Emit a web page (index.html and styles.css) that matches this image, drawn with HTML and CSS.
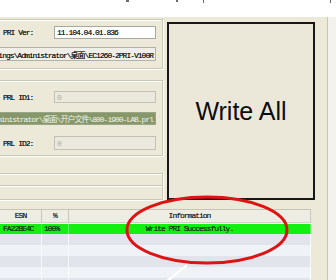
FILE: index.html
```html
<!DOCTYPE html>
<html>
<head>
<meta charset="utf-8">
<link rel="stylesheet" href="styles.css">
</head>
<body>
<div class="shot">
  <div class="topstrip">
    <span class="mk m1"></span><span class="mk m2"></span><span class="mk m3"></span><span class="mk m4"></span>
  </div>
  <div class="frame">
    <div class="work">
      <div class="upper">
        <div class="left mono">
          <div class="group g1">
            <div class="row"><span class="lbl">PRI Ver:</span><div class="tb tb-white">11.104.04.01.836</div></div>
            <div class="path path1"><span>C:\Documents and Settings\Administrator\桌面\EC1260-2PRI-V100R</span></div>
          </div>
          <div class="group g2">
            <div class="row r1"><span class="lbl">PRL ID1:</span><div class="tb tb-dis">0</div></div>
            <div class="path path2"><span>C:\Documents and Settings\Administrator\桌面\开户文件\800-1900-LAB.prl</span></div>
            <div class="row r3"><span class="lbl">PRL ID2:</span><div class="tb tb-dis">0</div></div>
          </div>
          <div class="group g3"><div class="sep"></div></div>
        </div>
        <div class="writeall">Write All</div>
      </div>
      <div class="table mono">
        <div class="trow thead">
          <div class="c">ESN</div><div class="c">%</div><div class="c info">Information</div>
        </div>
        <div class="trow ok">
          <div class="c esn">FA22BE4C</div><div class="c pct">100%</div><div class="c info">Write PRI Successfully.</div>
        </div>
        <div class="trow dark"><div class="c"></div><div class="c"></div><div class="c"></div></div>
        <div class="trow light"><div class="c"></div><div class="c"></div><div class="c"></div></div>
        <div class="trow dark"><div class="c"></div><div class="c"></div><div class="c"></div></div>
        <div class="trow light"><div class="c"></div><div class="c"></div><div class="c"></div></div>
        <div class="trow dark"><div class="c"></div><div class="c"></div><div class="c"></div></div>
      </div>
    </div>
    <div class="edge"></div>
  </div>
  <svg class="annot" width="336" height="280" viewBox="0 0 336 280">
    <ellipse cx="207" cy="230" rx="80" ry="33" fill="none" stroke="#de1414" stroke-width="3"/>
    <line x1="166" y1="282" x2="187" y2="265" stroke="#ffffff" stroke-width="2.2"/>
  </svg>
</div>
</body>
</html>
```
FILE: styles.css
```css
html, body {
  margin: 0;
  padding: 0;
  background: #ece9d8;
}
.shot {
  position: relative;
  width: 336px;
  height: 280px;
  overflow: hidden;
  background: #ece9d8;
}
.mono {
  font-family: "Liberation Mono", "Noto Sans CJK SC", monospace;
  font-size: 8px;
  letter-spacing: -1px;
  color: #000;
  text-shadow: 0 0 0.4px rgba(0, 0, 0, 0.6);
}
.topstrip {
  height: 17px;
  background: #fff;
  display: flex;
  align-items: flex-start;
}
.mk { display: block; background: #6a6a6a; }
.m1 { margin-left: 126px; width: 3px; height: 2px; }
.m2 { margin-left: 47px; width: 2px; height: 2px; }
.m3 { margin-left: 25px; width: 1px; height: 3px; }
.m4 { margin-left: 126px; width: 1px; height: 3px; }

.frame {
  display: flex;
  height: 263px;
}
.work {
  width: 328px;
  display: flex;
  flex-direction: column;
}
.edge {
  width: 8px;
  border-left: 1px solid #c7c5b6;
  background: #f3f2ec;
}
.upper {
  display: flex;
  height: 192px;
  flex-shrink: 0;
}
.left {
  width: 163px;
  display: flex;
  flex-direction: column;
  flex-shrink: 0;
}
.group {
  margin-left: -6px;
  width: 169px;
  box-sizing: border-box;
  border: 1px solid #c9c7b7;
  box-shadow: inset 1px 1px 0 #fff, 1px 1px 0 #fff;
  padding: 0 6px 0 8px;
}
.g1 { margin-top: 2px; height: 50px; padding-top: 6px; }
.g2 { margin-top: 11px; height: 76px; padding-top: 10px; }
.g3 { margin-top: 17px; height: 27px; padding-top: 11px; }
.sep {
  margin: 0 -6px 0 -8px;
  border-top: 1px solid #c9c7b7;
  border-bottom: 1px solid #fff;
}
.row {
  display: flex;
  align-items: center;
  height: 13px;
}
.r1 { height: 12px; }
.r3 { height: 14px; margin-top: 11px; }
.lbl {
  width: 51px;
  flex-shrink: 0;
  white-space: nowrap;
  color: #111;
}
.tb {
  width: 102px;
  height: 100%;
  box-sizing: border-box;
  border: 1px solid #a9a89e;
  padding-left: 2px;
  display: flex;
  align-items: center;
}
.tb-white { background: #fff; color: #111; }
.tb-dis { background: #ebe9dd; border-color: #c3c1b5; color: #aeaca2; text-shadow: none; }
.path {
  margin-left: -12px;
  width: 165px;
  box-sizing: border-box;
  display: flex;
  justify-content: flex-end;
  align-items: center;
  overflow: hidden;
  white-space: nowrap;
  padding-right: 2px;
}
.path span { flex-shrink: 0; }
.path1 {
  margin-top: 8px;
  height: 14px;
  background: #efeee7;
  border: 1px solid #b3b2a8;
  color: #111;
}
.path2 {
  margin-top: 9px;
  height: 13px;
  background: #86976a;
  border: 1px solid #9aa585;
  color: #f2f4e6;
  text-shadow: none;
}
.writeall {
  margin-left: 4px;
  margin-top: 5px;
  width: 148px;
  height: 178px;
  box-sizing: border-box;
  border: 2px solid #171717;
  background: #ebe8da;
  display: flex;
  align-items: center;
  justify-content: center;
  font-family: "Liberation Sans", Arial, sans-serif;
  font-size: 25px;
  color: #0c0c0c;
  letter-spacing: 0;
}
.table {
  width: 311px;
  border-top: 1px solid #c6c4b6;
  background: #f7f7f2;
}
.trow {
  display: grid;
  grid-template-columns: 42px 27px 1fr;
  height: 11px;
}
.trow .c {
  border-right: 1px solid rgba(255, 255, 255, 0.75);
  line-height: 10px;
  white-space: nowrap;
  overflow: hidden;
}
.thead {
  height: 12px;
  background: #eeede4;
  border-bottom: 1px solid #d3d1c4;
  margin-bottom: 1px;
}
.thead .c {
  text-align: center;
  line-height: 12px;
  border-right: 1px solid #c9c7b9;
  color: #1e1e1e;
}
.ok {
  height: 10px;
  background: #12f012;
}
.ok .c { color: #123012; border-right-color: rgba(255, 255, 255, 0.35); }
.ok .esn { padding-left: 3px; }
.ok .pct { padding-left: 2px; }
.ok .info { text-align: center; }
.dark { background: #e1e4ea; }
.light { background: #eff2f6; }
.annot {
  position: absolute;
  left: 0;
  top: 0;
  pointer-events: none;
}
```
